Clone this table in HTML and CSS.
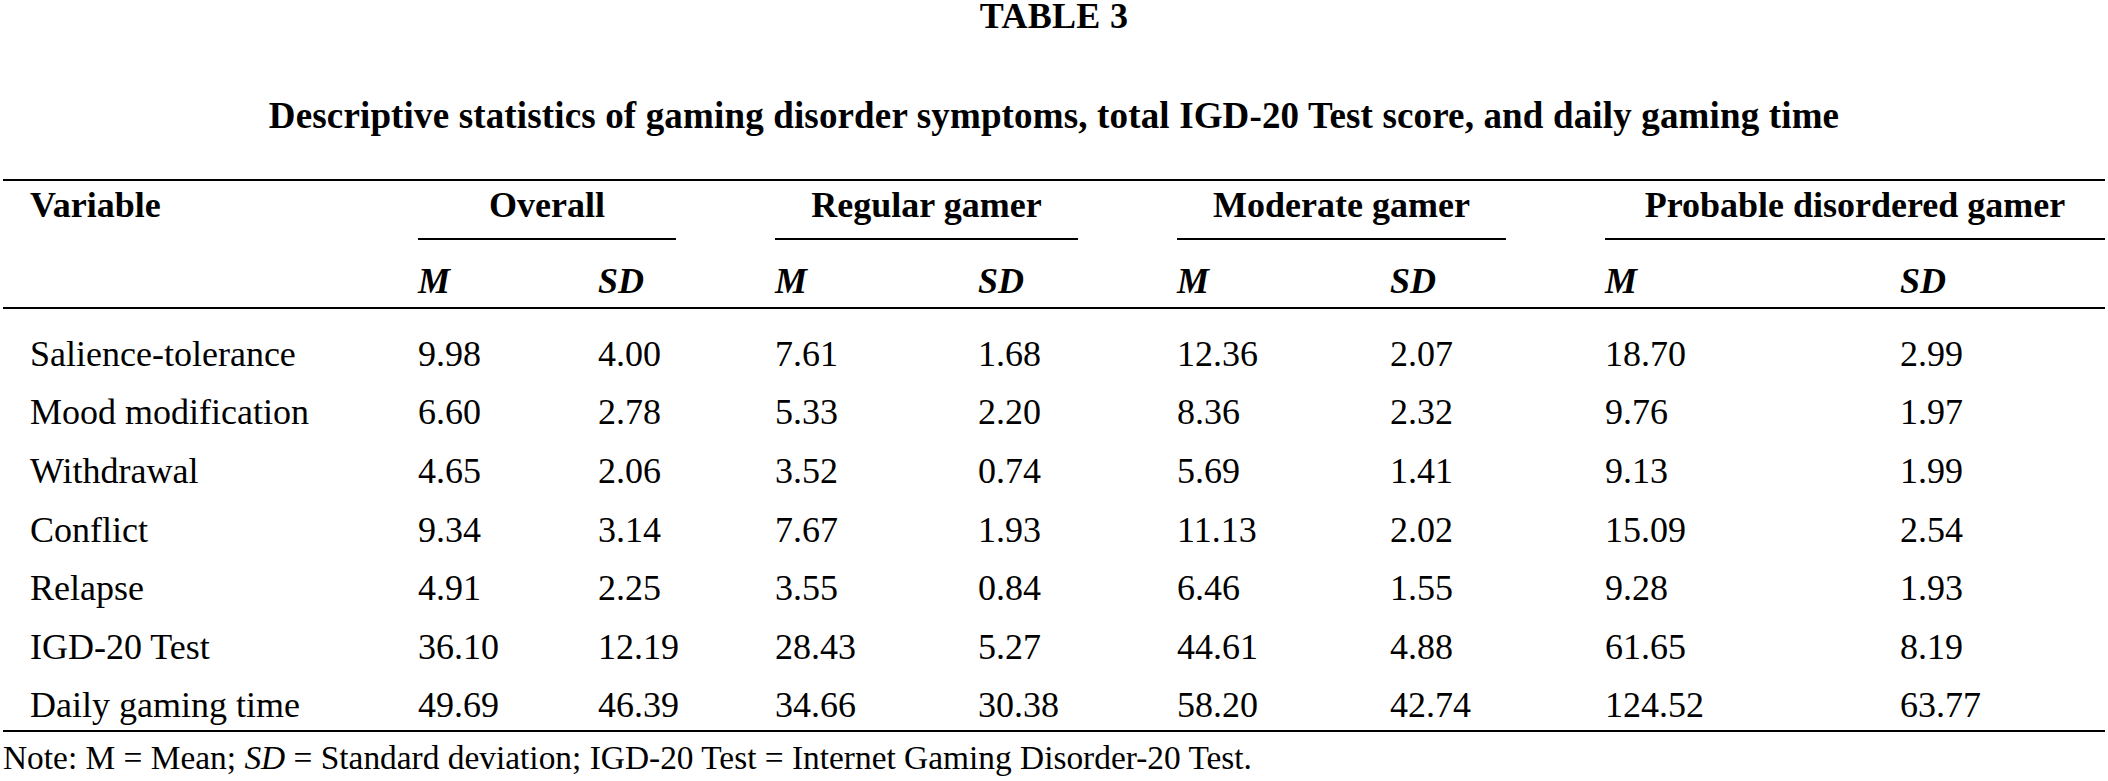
FILE: index.html
```html
<!DOCTYPE html>
<html lang="en">
<head>
<meta charset="utf-8">
<title>Table 3</title>
<link rel="stylesheet" href="styles.css">
</head>
<body>
<div class="page">
  <div class="table-label">TABLE 3</div>
  <div class="caption">Descriptive statistics of gaming disorder symptoms, total IGD-20 Test score, and daily gaming time</div>
  <table class="stats">
    <colgroup>
      <col class="c0"><col class="c1"><col class="c2"><col class="c3"><col class="c4"><col class="c5"><col class="c6"><col class="c7"><col class="c8">
    </colgroup>
    <thead>
      <tr class="group-row">
        <th class="var-head" rowspan="2">Variable</th>
        <th colspan="2"><div class="group g-overall">Overall</div></th>
        <th colspan="2"><div class="group g-regular">Regular gamer</div></th>
        <th colspan="2"><div class="group g-moderate">Moderate gamer</div></th>
        <th colspan="2"><div class="group g-probable">Probable disordered gamer</div></th>
      </tr>
      <tr class="sub-row">
        <th>M</th><th>SD</th><th>M</th><th>SD</th><th>M</th><th>SD</th><th>M</th><th>SD</th>
      </tr>
    </thead>
    <tbody>
      <tr><td>Salience-tolerance</td><td>9.98</td><td>4.00</td><td>7.61</td><td>1.68</td><td>12.36</td><td>2.07</td><td>18.70</td><td>2.99</td></tr>
      <tr><td>Mood modification</td><td>6.60</td><td>2.78</td><td>5.33</td><td>2.20</td><td>8.36</td><td>2.32</td><td>9.76</td><td>1.97</td></tr>
      <tr><td>Withdrawal</td><td>4.65</td><td>2.06</td><td>3.52</td><td>0.74</td><td>5.69</td><td>1.41</td><td>9.13</td><td>1.99</td></tr>
      <tr><td>Conflict</td><td>9.34</td><td>3.14</td><td>7.67</td><td>1.93</td><td>11.13</td><td>2.02</td><td>15.09</td><td>2.54</td></tr>
      <tr><td>Relapse</td><td>4.91</td><td>2.25</td><td>3.55</td><td>0.84</td><td>6.46</td><td>1.55</td><td>9.28</td><td>1.93</td></tr>
      <tr><td>IGD-20 Test</td><td>36.10</td><td>12.19</td><td>28.43</td><td>5.27</td><td>44.61</td><td>4.88</td><td>61.65</td><td>8.19</td></tr>
      <tr><td>Daily gaming time</td><td>49.69</td><td>46.39</td><td>34.66</td><td>30.38</td><td>58.20</td><td>42.74</td><td>124.52</td><td>63.77</td></tr>
    </tbody>
  </table>
  <p class="note">Note: M = Mean; <i>SD</i> = Standard deviation; IGD-20 Test = Internet Gaming Disorder-20 Test.</p>
</div>
</body>
</html>
```

FILE: styles.css
```css
html, body {
  margin: 0;
  padding: 0;
  background: #fff;
}

body {
  font-family: "Liberation Serif", "Times New Roman", serif;
  color: #000;
}

.page {
  padding: 0 3px;
}

.table-label {
  font-weight: bold;
  font-size: 36px;
  line-height: 33px;
  letter-spacing: 0.3px;
  text-align: center;
}

.caption {
  margin-top: 63px;
  font-weight: bold;
  font-size: 37px;
  line-height: 40px;
  letter-spacing: 0.15px;
  text-align: center;
}

.stats {
  margin-top: 43px;
  width: 2102px;
  table-layout: fixed;
  border-collapse: collapse;
  border-top: 2px solid #000;
  border-bottom: 2px solid #000;
  font-size: 36px;
  line-height: 40px;
}

.c0 { width: 415px; }
.c1 { width: 180px; }
.c2 { width: 177px; }
.c3 { width: 203px; }
.c4 { width: 199px; }
.c5 { width: 213px; }
.c6 { width: 215px; }
.c7 { width: 295px; }
.c8 { width: 205px; }

.stats th,
.stats td {
  padding: 0;
  text-align: left;
  vertical-align: top;
  white-space: nowrap;
}

.stats thead {
  border-bottom: 2px solid #000;
}

.group-row th {
  padding-top: 4px;
  font-weight: bold;
}

.group-row .var-head {
  padding-left: 27px;
}

.group {
  text-align: center;
  padding-bottom: 13px;
  border-bottom: 2px solid #000;
}

.g-overall { width: 258px; }
.g-regular { width: 303px; }
.g-moderate { width: 329px; }
.g-probable { width: 500px; }

.sub-row th {
  padding-top: 21px;
  padding-bottom: 6px;
  font-weight: bold;
  font-style: italic;
}

.stats tbody td {
  padding-top: 13.45px;
  padding-bottom: 5.15px;
}

.stats tbody tr:first-child td {
  padding-top: 24.85px;
}

.stats tbody td:first-child {
  padding-left: 27px;
}

.note {
  margin: 8px 0 0;
  font-size: 33.4px;
  line-height: 36px;
}
```
